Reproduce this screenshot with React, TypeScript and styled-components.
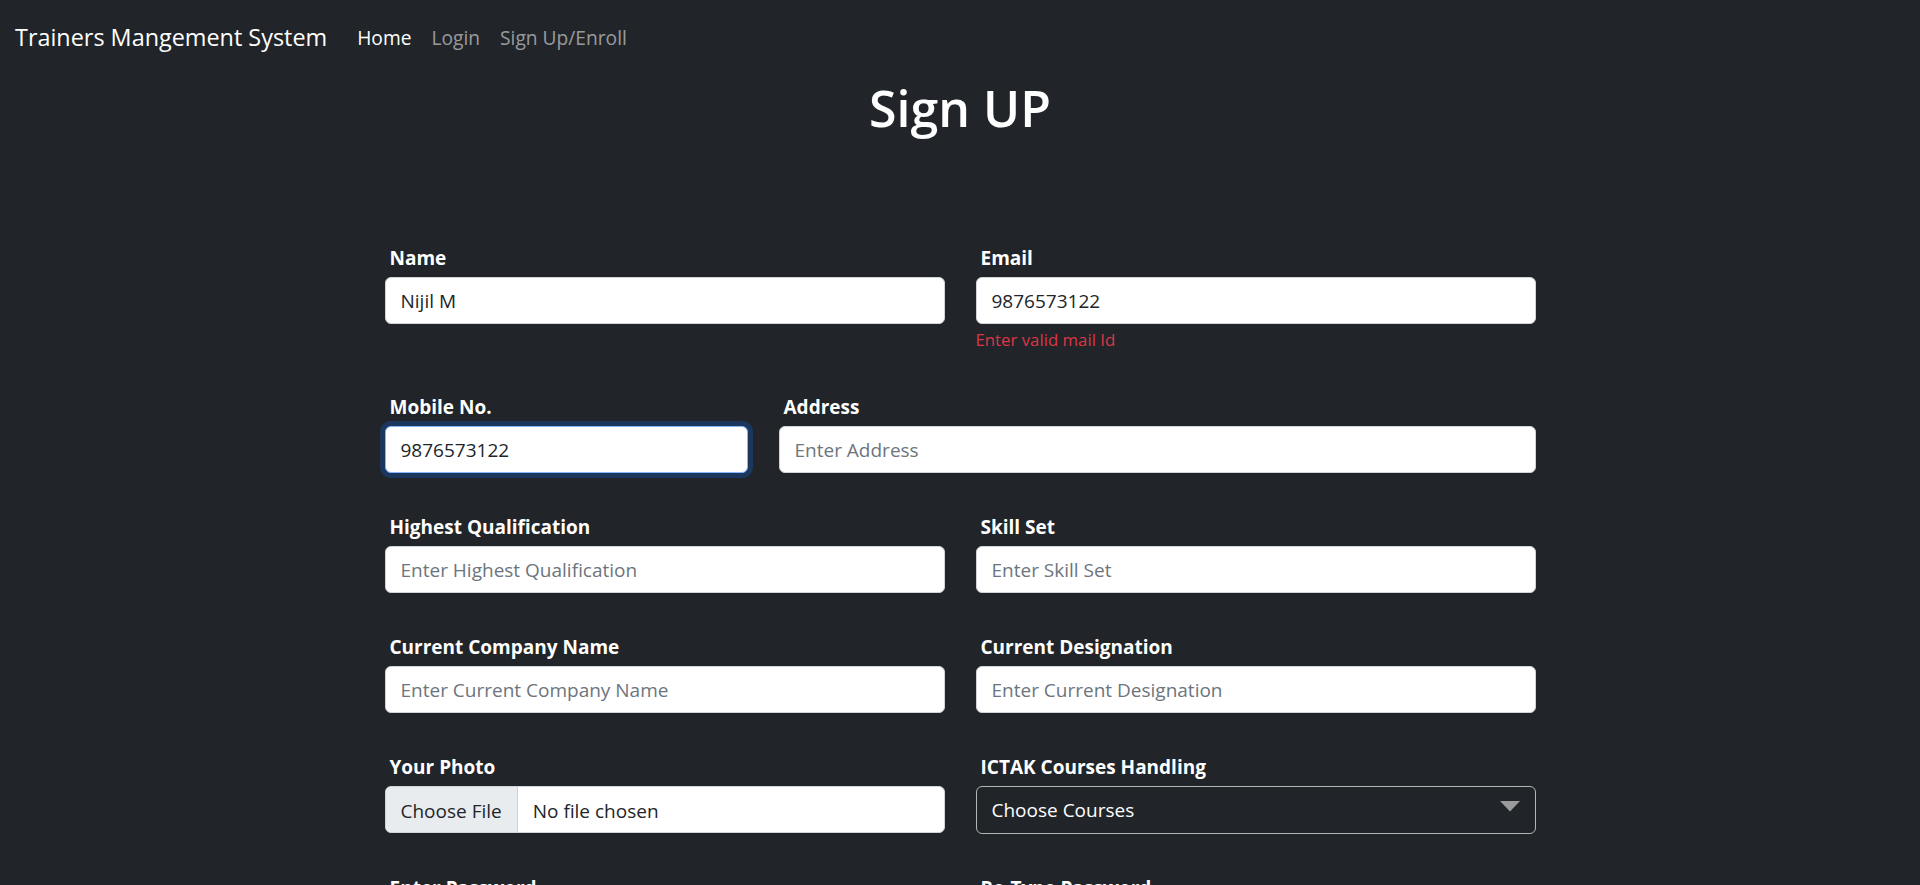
import React, { useEffect, useRef } from "react";
import styled, { createGlobalStyle, css } from "styled-components";

const GlobalStyle = createGlobalStyle`
  html, body {
    margin: 0;
    padding: 0;
    background: #212529;
  }
  body {
    font-family: "Open Sans", "Noto Sans", "Liberation Sans", sans-serif;
    color: #ffffff;
  }
  * { box-sizing: border-box; }
`;

const Page = styled.div`
  min-height: 100vh;
  background: #212529;
  padding-bottom: 60px;
`;

const NavBar = styled.nav`
  height: 70px;
  display: flex;
  align-items: center;
  padding: 5px 15px 0;
  background: #212529;
`;

const Brand = styled.a`
  font-size: 23.4px;
  line-height: 37.5px;
  color: #ffffff;
  text-decoration: none;
  margin-right: 20px;
  white-space: nowrap;
`;

const NavList = styled.ul`
  display: flex;
  list-style: none;
  margin: 0;
  padding: 0;
`;

const NavLink = styled.a<{ $active?: boolean }>`
  display: block;
  padding: 10px;
  font-size: 19.2px;
  line-height: 30px;
  text-decoration: none;
  color: ${(p) => (p.$active ? "#ffffff" : "rgba(255,255,255,0.55)")};
`;

const Title = styled.h1`
  margin: 8px 0 0;
  text-align: center;
  font-size: 50px;
  line-height: 60px;
  font-weight: 600;
  color: #ffffff;
`;

const FormGrid = styled.form`
  width: 1151px;
  margin: 103px auto 0;
  display: grid;
  grid-template-columns: repeat(12, 1fr);
  column-gap: 31px;
  row-gap: 37px;
  align-items: start;
`;

const Field = styled.div<{ $span: number }>`
  grid-column: span ${(p) => p.$span};
  display: flex;
  flex-direction: column;
`;

const Label = styled.label`
  font-size: 19px;
  line-height: 30px;
  font-weight: 700;
  color: #ffffff;
  padding: 2px 0 0 5px;
  margin-bottom: 4px;
`;

const controlBase = css`
  width: 100%;
  height: 47px;
  padding: 7.5px 15px;
  font-family: inherit;
  font-size: 19px;
  line-height: 30px;
  border-radius: 6px;
  outline: none;
`;

const TextInput = styled.input<{ $focused?: boolean }>`
  ${controlBase};
  color: #212529;
  background: #ffffff;
  border: 1px solid #ced4da;
  &::placeholder { color: #6c757d; opacity: 1; }
  ${(p) =>
    p.$focused &&
    css`
      border-color: #86b7fe;
      box-shadow: 0 0 0 5px rgba(13, 110, 253, 0.25);
    `}
`;

const FileInput = styled.input`
  ${controlBase};
  color: #212529;
  background: #ffffff;
  border: 1px solid #ced4da;
  overflow: hidden;
  &::file-selector-button {
    font-family: inherit;
    font-size: 19px;
    line-height: 30px;
    height: 47px;
    padding: 7.5px 15px;
    margin: -7.5px 15px -7.5px -15px;
    color: #212529;
    background: #e9ecef;
    border: 0;
    border-right: 1px solid #ced4da;
    border-radius: 0;
  }
`;

const SelectWrap = styled.div`
  position: relative;
`;

const Select = styled.select`
  ${controlBase};
  height: 48px;
  appearance: none;
  -webkit-appearance: none;
  color: #ffffff;
  background: #212529;
  border: 1px solid #b5b5b5;
  padding-right: 50px;
`;

const Arrow = styled.svg`
  position: absolute;
  right: 16px;
  top: 15px;
  pointer-events: none;
`;

const ErrorText = styled.div`
  margin-top: 3px;
  font-size: 16.8px;
  line-height: 26px;
  color: #dc3545;
`;

const SubmitRow = styled.div`
  grid-column: span 12;
  display: flex;
  justify-content: center;
`;

const SubmitButton = styled.button`
  font-family: inherit;
  font-size: 19px;
  line-height: 30px;
  padding: 7.5px 15px;
  color: #fff;
  background: #0d6efd;
  border: 1px solid #0d6efd;
  border-radius: 6px;
`;

export default function App() {
  const mobileRef = useRef<HTMLInputElement>(null);
  useEffect(() => {
    const el = mobileRef.current;
    if (el) {
      el.focus();
      const n = el.value.length;
      el.setSelectionRange(n, n);
    }
  }, []);

  return (
    <Page>
      <GlobalStyle />
      <NavBar>
        <Brand href="#">Trainers Mangement System</Brand>
        <NavList>
          <li><NavLink href="#" $active>Home</NavLink></li>
          <li><NavLink href="#">Login</NavLink></li>
          <li><NavLink href="#">Sign Up/Enroll</NavLink></li>
        </NavList>
      </NavBar>

      <Title>Sign UP</Title>

      <FormGrid onSubmit={(e) => e.preventDefault()}>
        <Field $span={6}>
          <Label>Name</Label>
          <TextInput type="text" defaultValue="Nijil M" placeholder="Enter Name" />
        </Field>
        <Field $span={6}>
          <Label>Email</Label>
          <TextInput type="text" defaultValue="9876573122" placeholder="Enter Email" />
          <ErrorText>Enter valid mail Id</ErrorText>
        </Field>

        <Field $span={4}>
          <Label>Mobile No.</Label>
          <TextInput ref={mobileRef} $focused type="text" defaultValue="9876573122" placeholder="Enter Mobile No." />
        </Field>
        <Field $span={8}>
          <Label>Address</Label>
          <TextInput type="text" placeholder="Enter Address" />
        </Field>

        <Field $span={6}>
          <Label>Highest Qualification</Label>
          <TextInput type="text" placeholder="Enter Highest Qualification" />
        </Field>
        <Field $span={6}>
          <Label>Skill Set</Label>
          <TextInput type="text" placeholder="Enter Skill Set" />
        </Field>

        <Field $span={6}>
          <Label>Current Company Name</Label>
          <TextInput type="text" placeholder="Enter Current Company Name" />
        </Field>
        <Field $span={6}>
          <Label>Current Designation</Label>
          <TextInput type="text" placeholder="Enter Current Designation" />
        </Field>

        <Field $span={6}>
          <Label>Your Photo</Label>
          <FileInput type="file" />
        </Field>
        <Field $span={6}>
          <Label>ICTAK Courses Handling</Label>
          <SelectWrap>
            <Select defaultValue="">
              <option value="">Choose Courses</option>
              <option value="fsd">Full Stack Development</option>
              <option value="ds">Data Science</option>
            </Select>
            <Arrow width="20" height="11" viewBox="0 0 20 11" aria-hidden="true">
              <polygon points="0,0 20,0 10,10.5" fill="#9a9a9a" />
            </Arrow>
          </SelectWrap>
        </Field>

        <Field $span={6}>
          <Label>Enter Password</Label>
          <TextInput type="password" placeholder="Enter Password" />
        </Field>
        <Field $span={6}>
          <Label>Re-Type Password</Label>
          <TextInput type="password" placeholder="Re-Type Password" />
        </Field>

        <SubmitRow>
          <SubmitButton type="submit">Submit</SubmitButton>
        </SubmitRow>
      </FormGrid>
    </Page>
  );
}
